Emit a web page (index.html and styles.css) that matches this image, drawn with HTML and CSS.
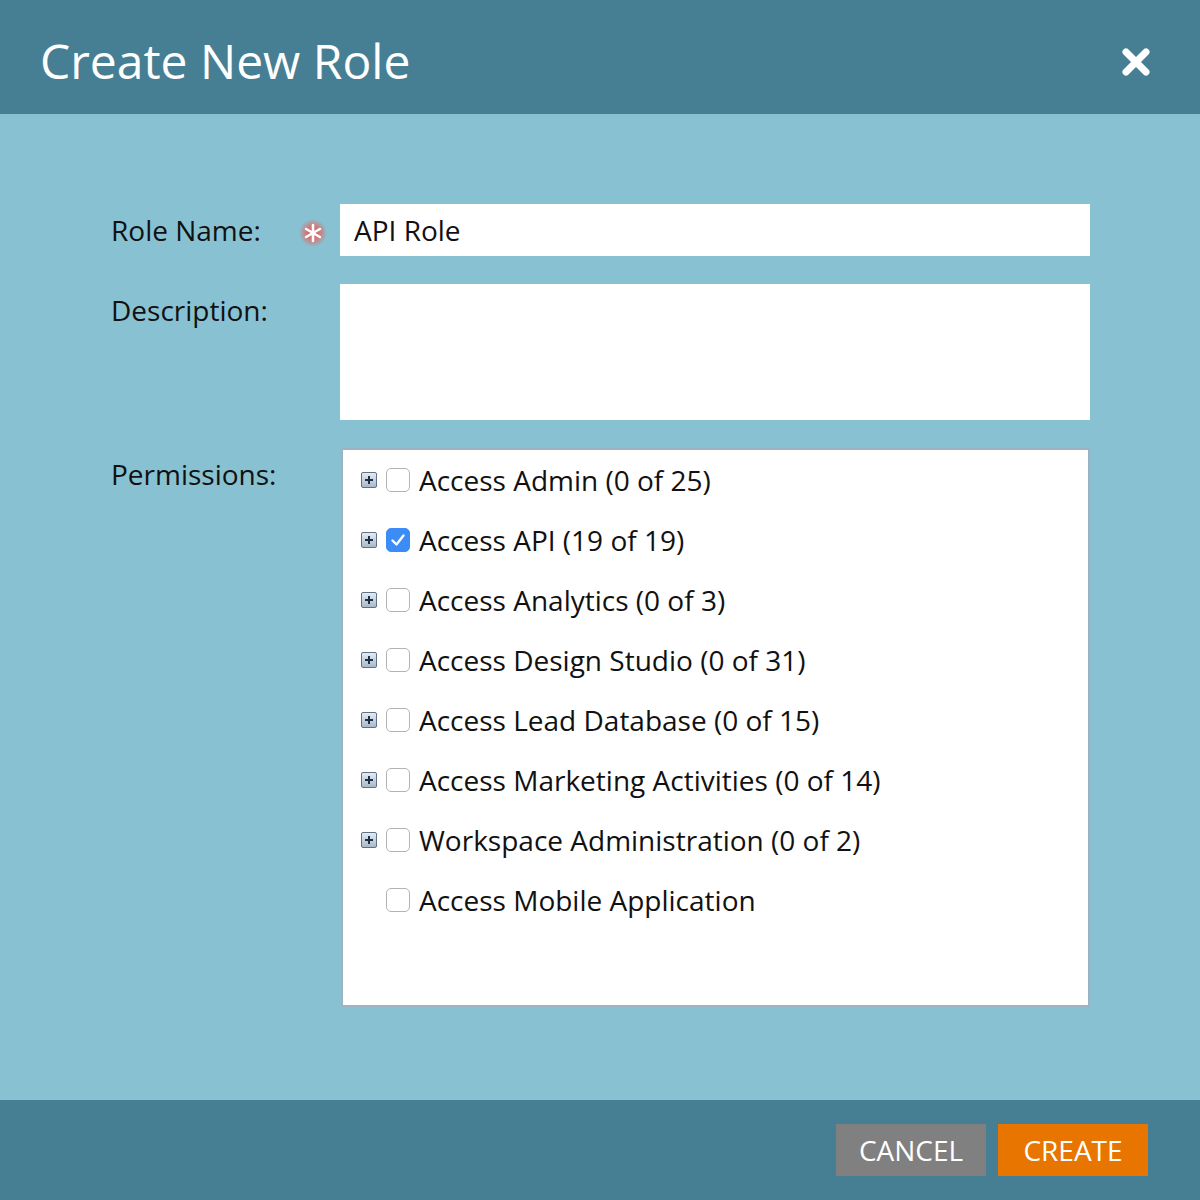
FILE: index.html
```
<!DOCTYPE html>
<html lang="en">
<head>
  <meta charset="UTF-8">
  <title>Create New Role</title>
  <link rel="stylesheet" href="styles.css">
</head>
<body>

  <div class="dialog">
    <div class="header">
      <h1>Create New Role</h1>
      <button class="close" aria-label="Close">
        <svg width="30" height="30" viewBox="0 0 30 30">
          <path d="M5 5 L25 25 M25 5 L5 25" stroke="#fff" stroke-width="7" stroke-linecap="round"/>
        </svg>
      </button>
    </div>

    <div class="content">
      <div class="form">
        <div class="label">
          <span>Role Name:</span>
          <svg class="required" width="28" height="28" viewBox="0 0 28 28">
            <defs>
              <radialGradient id="glow">
                <stop offset="0" stop-color="#d9534f"/>
                <stop offset="0.55" stop-color="#d9716f" stop-opacity="0.8"/>
                <stop offset="1" stop-color="#d9716f" stop-opacity="0"/>
              </radialGradient>
            </defs>
            <circle cx="14" cy="14" r="14" fill="url(#glow)"/>
            <path d="M14 6 V22 M7.1 10 L20.9 18 M20.9 10 L7.1 18" stroke="#fff" stroke-width="2.6" stroke-linecap="round"/>
          </svg>
        </div>
        <input type="text" class="field" value="API Role" />

        <div class="label"><span>Description:</span></div>
        <textarea class="field desc"></textarea>

        <div class="label"><span>Permissions:</span></div>
        <div class="perms">
          <div class="perm">
            <span class="expand"></span>
            <span class="check"></span>
            <span>Access Admin (0 of 25)</span>
          </div>
          <div class="perm">
            <span class="expand"></span>
            <span class="check checked">
              <svg width="24" height="24" viewBox="0 0 24 24"><path d="M6.5 12.5 L10.5 16.5 L17.5 7.5" fill="none" stroke="#fff" stroke-width="2.4" stroke-linecap="round" stroke-linejoin="round"/></svg>
            </span>
            <span>Access API (19 of 19)</span>
          </div>
          <div class="perm">
            <span class="expand"></span>
            <span class="check"></span>
            <span>Access Analytics (0 of 3)</span>
          </div>
          <div class="perm">
            <span class="expand"></span>
            <span class="check"></span>
            <span>Access Design Studio (0 of 31)</span>
          </div>
          <div class="perm">
            <span class="expand"></span>
            <span class="check"></span>
            <span>Access Lead Database (0 of 15)</span>
          </div>
          <div class="perm">
            <span class="expand"></span>
            <span class="check"></span>
            <span>Access Marketing Activities (0 of 14)</span>
          </div>
          <div class="perm">
            <span class="expand"></span>
            <span class="check"></span>
            <span>Workspace Administration (0 of 2)</span>
          </div>
          <div class="perm">
            <span class="expand none"></span>
            <span class="check"></span>
            <span>Access Mobile Application</span>
          </div>
        </div>
      </div>
    </div>

    <div class="footer">
      <button class="btn cancel">CANCEL</button>
      <button class="btn create">CREATE</button>
    </div>
  </div>

</body>
</html>
```

FILE: styles.css
```
body {
  margin: 0;
  font-family: 'Open Sans', sans-serif;
  color: #111;
}

.dialog {
  width: 1200px;
  height: 1200px;
  display: flex;
  flex-direction: column;
  background: #88c1d1;
}

.header {
  background: #467f93;
  height: 114px;
  box-sizing: border-box;
  display: flex;
  align-items: center;
  justify-content: space-between;
  padding: 6px 49px 0 40px;
}

.header h1 {
  margin: 0;
  color: white;
  font-weight: 400;
  font-size: 48px;
}

.close {
  background: none;
  border: none;
  padding: 0;
  margin-top: 4px;
  width: 30px;
  height: 30px;
  cursor: pointer;
}

.content {
  flex: 1;
  padding: 90px 0 0 111px;
}

.form {
  display: grid;
  grid-template-columns: 229px 750px;
  align-items: start;
  row-gap: 28px;
}

.label {
  display: flex;
  align-items: center;
  justify-content: space-between;
  height: 52px;
  padding-right: 13px;
  font-size: 28px;
}

.required {
  margin-top: 6px;
}

.field {
  box-sizing: border-box;
  width: 750px;
  height: 52px;
  border: none;
  margin: 0;
  padding: 0 14px;
  font-family: 'Open Sans', sans-serif;
  font-size: 28px;
  color: #111;
  background: white;
  outline: none;
}

.desc {
  height: 136px;
  resize: none;
}

.perms {
  box-sizing: border-box;
  width: 749px;
  height: 559px;
  margin: 0 0 0 1px;
  background: white;
  border: 2px solid #9eb2c3;
  padding: 0 0 0 18px;
}

.perm {
  display: flex;
  align-items: center;
  height: 60px;
  font-size: 28px;
}

.expand {
  box-sizing: border-box;
  width: 16px;
  height: 16px;
  margin-right: 9px;
  border: 1px solid #5d7189;
  border-radius: 2px;
  background: linear-gradient(#e4ebf2, #a9b8c8);
  position: relative;
}

.expand::before,
.expand::after {
  content: '';
  position: absolute;
  background: #1f2f45;
}

.expand::before {
  left: 3px;
  right: 3px;
  top: 6px;
  height: 2px;
}

.expand::after {
  top: 3px;
  bottom: 3px;
  left: 6px;
  width: 2px;
}

.expand.none {
  visibility: hidden;
}

.check {
  box-sizing: border-box;
  width: 24px;
  height: 24px;
  margin-right: 9px;
  border: 1px solid #b3b3b3;
  border-radius: 5px;
  background: white;
  display: flex;
}

.check.checked {
  background: #3b8cf6;
  border-color: #3b8cf6;
}

.check.checked svg {
  margin: -1px;
}

.footer {
  background: #467f93;
  height: 100px;
  box-sizing: border-box;
  padding: 24px 52px 0 0;
  display: flex;
  justify-content: flex-end;
  gap: 12px;
}

.btn {
  width: 150px;
  height: 52px;
  border: none;
  color: white;
  font-family: 'Open Sans', sans-serif;
  font-size: 28px;
  cursor: pointer;
}

.cancel {
  background: #808080;
}

.create {
  background: #e87500;
}
```
